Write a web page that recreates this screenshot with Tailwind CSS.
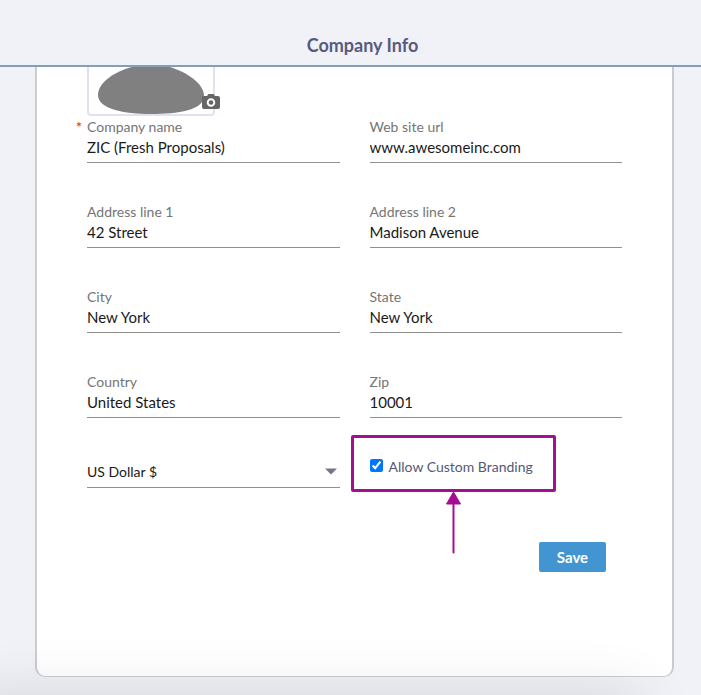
<!DOCTYPE html>
<html lang="en">
<head>
  <meta charset="UTF-8" />
  <meta name="viewport" content="width=device-width, initial-scale=1.0"/>
  <title>Company Info</title>
  <script src="https://cdn.jsdelivr.net/npm/@tailwindcss/browser@4"></script>
  <style>
    body {
      font-family: 'Lato', 'Open Sans', sans-serif;
    }
  </style>
</head>
<body class="relative overflow-x-hidden min-h-screen flex flex-col bg-[#f1f2f8] text-[15px] text-[#1a1a1a]">

  <!-- Header -->
  <header class="border-b-2 border-[#819fb7] pl-6 pt-[33px] pb-[7px]">
    <h1 class="text-center text-lg leading-[25px] font-bold text-[#585b80]">Company Info</h1>
  </header>

  <!-- Company form -->
  <main class="pl-[35px] pr-[27px] pb-[18px]">
    <form class="border-x-2 border-b border-[#cbccd0] rounded-b-[10px] bg-white px-[50px] pb-[104px]">

      <!-- Logo -->
      <div class="relative w-32 h-[49px] border-2 border-t-0 border-[#e0e2f2] rounded-b">
        <svg class="ml-[9px] w-[106px] h-[47px]" viewBox="0 0 106 47" aria-hidden="true">
          <path d="M34 0H72C88 5 106 16 106 29C106 43 80 47 53 47C26 47 0 42 0 28C0 15 18 4 34 0Z" fill="#808080"/>
        </svg>
        <button type="button" aria-label="Change logo" class="absolute -right-[7px] bottom-1 w-[18px] h-4">
          <svg class="w-[18px] h-4" viewBox="0 0 18 16" aria-hidden="true">
            <path d="M6.500 0H11.500L13 2H16Q18 2 18 4V13Q18 15 16 15H2Q0 15 0 13V4Q0 2 2 2H5Z" fill="#666"/>
            <circle cx="9" cy="8.500" r="3.300" fill="#666" stroke="#fff" stroke-width="1.900"/>
          </svg>
        </button>
      </div>

      <!-- Fields -->
      <div class="mt-px grid grid-cols-2 gap-x-[30px] gap-y-[39px]">
        <div class="relative">
          <span class="absolute -left-[11px] top-0 text-sm font-bold text-[#f0402c]">*</span>
          <label for="company" class="block text-sm leading-5 text-[#757575]">Company name</label>
          <input id="company" type="text" required value="ZIC (Fresh Proposals)" class="block w-full h-[26px] pb-1.5 border-b border-[#919191] focus:outline-none">
        </div>
        <div>
          <label for="website" class="block text-sm leading-5 text-[#757575]">Web site url</label>
          <input id="website" type="text" value="www.awesomeinc.com" class="block w-full h-[26px] pb-1.5 border-b border-[#919191] focus:outline-none">
        </div>
        <div>
          <label for="address1" class="block text-sm leading-5 text-[#757575]">Address line 1</label>
          <input id="address1" type="text" value="42 Street" class="block w-full h-[26px] pb-1.5 border-b border-[#919191] focus:outline-none">
        </div>
        <div>
          <label for="address2" class="block text-sm leading-5 text-[#757575]">Address line 2</label>
          <input id="address2" type="text" value="Madison Avenue" class="block w-full h-[26px] pb-1.5 border-b border-[#919191] focus:outline-none">
        </div>
        <div>
          <label for="city" class="block text-sm leading-5 text-[#757575]">City</label>
          <input id="city" type="text" value="New York" class="block w-full h-[26px] pb-1.5 border-b border-[#919191] focus:outline-none">
        </div>
        <div>
          <label for="state" class="block text-sm leading-5 text-[#757575]">State</label>
          <input id="state" type="text" value="New York" class="block w-full h-[26px] pb-1.5 border-b border-[#919191] focus:outline-none">
        </div>
        <div>
          <label for="country" class="block text-sm leading-5 text-[#757575]">Country</label>
          <input id="country" type="text" value="United States" class="block w-full h-[26px] pb-1.5 border-b border-[#919191] focus:outline-none">
        </div>
        <div>
          <label for="zip" class="block text-sm leading-5 text-[#757575]">Zip</label>
          <input id="zip" type="text" value="10001" class="block w-full h-[26px] pb-1.5 border-b border-[#919191] focus:outline-none">
        </div>
      </div>

      <!-- Currency and branding -->
      <div class="mt-[38px] grid grid-cols-2 gap-x-[30px]">
        <div class="relative">
          <select aria-label="Currency" class="block w-full h-8 appearance-none border-b border-[#919191] text-sm focus:outline-none">
            <option>US Dollar $</option>
          </select>
          <svg class="absolute right-[3px] top-3 w-3 h-[7px] pointer-events-none" viewBox="0 0 12 7" aria-hidden="true">
            <path d="M0 0.500H12L6 6.500Z" fill="#77758a"/>
          </svg>
        </div>
        <div class="relative">
          <label class="flex items-center gap-[6px] h-[22px] text-sm text-[#555875]">
            <input type="checkbox" checked class="w-[13px] h-[13px] mb-[3px] accent-[#0075ff]">
            Allow Custom Branding
          </label>
          <!-- Highlight -->
          <div class="absolute -left-[19px] -top-[21px] w-[205px] h-[57px] border-3 border-[#a50d92] rounded-xs pointer-events-none"></div>
          <svg class="absolute left-[76px] top-[35px] w-4 h-[63px] pointer-events-none" viewBox="0 0 16 63" aria-hidden="true">
            <path d="M7.500 1L14.500 13H0.500Z" fill="#a50d92" stroke="#a50d92" stroke-linejoin="round"/>
            <path d="M7.500 10V61.500" stroke="#a50d92" stroke-width="2" stroke-linecap="round"/>
          </svg>
        </div>
      </div>

      <!-- Save -->
      <div class="mt-[54px] pr-4 flex justify-end">
        <button type="submit" class="w-[67px] h-[30px] rounded-xs bg-[#4295d1] font-bold text-white hover:bg-[#3585c0]">Save</button>
      </div>
    </form>
  </main>

  <!-- Bottom shade -->
  <div class="absolute inset-x-0 bottom-0 h-16 overflow-hidden pointer-events-none">
    <div class="absolute -left-10 right-[60px] top-full h-16 shadow-[0_0_60px_rgba(0,0,0,0.12)]"></div>
  </div>

</body>
</html>
